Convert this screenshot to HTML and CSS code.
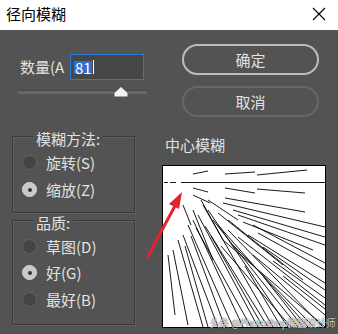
FILE: index.html
```html
<!DOCTYPE html>
<html lang="zh">
<head>
<meta charset="utf-8">
<link rel="stylesheet" href="styles.css">
</head>
<body>
<div class="titlebar">
  <span class="title">径向模糊</span>
  <svg class="close" width="14" height="14" viewBox="0 0 14 14"><path d="M1 1 L13 13 M13 1 L1 13" stroke="#000" stroke-width="1.1" fill="none"/></svg>
</div>
<div class="main">
  <div class="left">
    <div class="amount">
      <span class="alabel">数量(A</span>
      <div class="input"><span class="sel">81</span><span class="caret"></span></div>
    </div>
    <div class="slider">
      <div class="track"></div>
      <svg class="thumb" width="14" height="10" viewBox="0 0 14 10"><polygon points="7,0 13.5,6 13.5,9.5 0.5,9.5 0.5,6" fill="#f2f2f2"/></svg>
    </div>
    <div class="group g1">
      <span class="legend">模糊方法:</span>
      <div class="radio"><span class="dot"></span><span>旋转(S)</span></div>
      <div class="radio"><span class="dot on"></span><span>缩放(Z)</span></div>
    </div>
    <div class="group g2">
      <span class="legend">品质:</span>
      <div class="radio"><span class="dot"></span><span>草图(D)</span></div>
      <div class="radio"><span class="dot on"></span><span>好(G)</span></div>
      <div class="radio"><span class="dot"></span><span>最好(B)</span></div>
    </div>
  </div>
  <div class="right">
    <div class="btn ok">确定</div>
    <div class="btn cancel">取消</div>
    <div class="plabel">中心模糊</div>
    <div class="preview">
      <svg width="162" height="161" viewBox="0 0 162 161" stroke="#000" stroke-width="0.9" fill="none">
        <path d="M1 16.5H5 M7 16.5H13 M18 16.5H162"/>
        <path d="M30 8L45 5 M62 8L92 6 M94 9L144 4"/>
        <path d="M30 22L45 26 M62 22L92 27 M94 23L142 27"/>
        <path d="M30 29L47 37 M62 32L142 46 M60 37L162 61 M70 44L162 71 M75 49L162 79 M80 56L150 84"/>
        <path d="M90 59L162 97 M95 67L162 104 M85 69L162 117 M100 81L162 124 M75 71L162 139 M90 89L162 149"/>
        <path d="M70 79L150 160 M60 74L162 161 M55 59L145 161 M65 64L160 161 M50 54L135 161 M45 44L125 161"/>
        <path d="M40 39L110 161 M35 49L95 161 M30 54L80 161 M25 59L70 161 M20 69L55 161 M15 74L40 161"/>
        <path d="M10 84L25 159 M5 89L12 149 M38 34L60 74 M30 44L50 94 M20 39L28 59 M55 47L120 99 M65 54L140 114 M45 34L75 54"/>
        <path d="M110 95L162 132 M120 110L162 143 M100 110L140 161 M82 100L118 161 M48 70L100 161"/>
        <path d="M28 70L62 161 M22 80L45 161 M33 62L88 161 M42 60L105 161 M58 80L128 161"/>
      </svg>
    </div>
  </div>
</div>
<svg class="arrow" width="338" height="334" viewBox="0 0 338 334">
  <line x1="147" y1="258" x2="176" y2="204" stroke="#e3232f" stroke-width="3"/>
  <polygon points="182,192 179,209 169,204" fill="#e3232f"/>
</svg>
<span class="wm">头条 @Photoshop摄图设计师</span>
</body>
</html>
```

FILE: styles.css
```css
* { box-sizing: border-box; }
html, body { margin: 0; padding: 0; }
body {
  width: 338px;
  height: 334px;
  background: #535353;
  font-family: "Noto Sans CJK SC", "Noto Sans", sans-serif;
  color: #e2e2e2;
  font-size: 15px;
  position: relative;
  overflow: hidden;
}
.titlebar {
  height: 30px;
  background: #fff;
  display: flex;
  align-items: center;
  justify-content: space-between;
  padding: 0 12px 0 6px;
}
.title { color: #000; font-size: 15px; line-height: 18px; margin-top: -2px; }
.close { margin-top: -2px; }
.main { display: flex; padding-left: 12px; }
.left { width: 135px; display: flex; flex-direction: column; }
.amount {
  margin-top: 24px;
  height: 26px;
  display: flex;
  align-items: center;
}
.alabel { flex: none; width: 58px; padding-left: 8px; line-height: 16px; white-space: nowrap; overflow: visible; }
.input {
  flex: none;
  width: 74px;
  height: 26px;
  border: 1px solid #2b79d6;
  background: #474747;
  display: flex;
  align-items: center;
  padding-left: 3px;
}
.sel {
  background: #2f6fcf;
  color: #fff;
  line-height: 13px;
  height: 13px;
  font-size: 15px;
  padding: 0 0 0 1px;
}
.caret { width: 1px; height: 14px; background: #fff; margin-left: 1px; }
.slider {
  position: relative;
  margin-top: 5px;
  margin-left: 5px;
  width: 130px;
  height: 12px;
}
.track {
  position: absolute;
  left: 0; right: 0; top: 5px;
  height: 4px;
  background: #686868;
  border-top: 1px solid #484848;
  border-radius: 2px;
}
.thumb { position: absolute; left: 97px; top: 2px; }
.group {
  position: relative;
  width: 123px;
  border: 1px solid #3b3b3b;
  box-shadow: 1px 1px 0 #5f5f5f, inset 1px 1px 0 #5f5f5f;
  padding: 12px 0 9px 9px;
}
.g1 { margin-top: 39px; }
.g2 { margin-top: 7px; padding-bottom: 11px; }
.g2 .radio { height: 26.5px; }
.legend {
  position: absolute;
  left: 20px;
  top: -6px;
  background: #535353;
  padding: 0 3px;
  line-height: 16px;
}
.radio { height: 27px; display: flex; align-items: center; }
.dot {
  width: 15px; height: 15px;
  border-radius: 50%;
  background: #444;
  border: 1px solid #636363;
  margin-right: 9px;
  display: flex; align-items: center; justify-content: center;
}
.dot.on { background: #c9c9c9; border-color: #d6d6d6; }
.dot.on::after { content: ""; width: 4px; height: 4px; border-radius: 50%; background: #333; }
.right { margin-left: 15px; width: 164px; display: flex; flex-direction: column; }
.btn {
  margin-left: 20px;
  width: 137px;
  height: 31px;
  border-radius: 16px;
  display: flex; align-items: center; justify-content: center;
  line-height: 16px;
}
.ok { margin-top: 14px; border: 2px solid #bdbdbd; }
.cancel { margin-top: 11px; border: 2px solid #686868; }
.plabel { margin-top: 18px; margin-left: 3px; line-height: 20px; }
.preview {
  margin-top: 10px;
  width: 164px;
  height: 163px;
  background: #fff;
  border: 1px solid #000;
}
.preview svg { display: block; }
.arrow { position: absolute; left: 0; top: 0; pointer-events: none; }
.wm {
  position: absolute;
  left: 210px;
  top: 316px;
  font-size: 10px;
  letter-spacing: -0.4px;
  line-height: 13px;
  color: rgba(255,255,255,0.8);
  text-shadow: 0 0 1px rgba(0,0,0,0.7), 0 0 2px rgba(0,0,0,0.4);
  white-space: nowrap;
}
```
